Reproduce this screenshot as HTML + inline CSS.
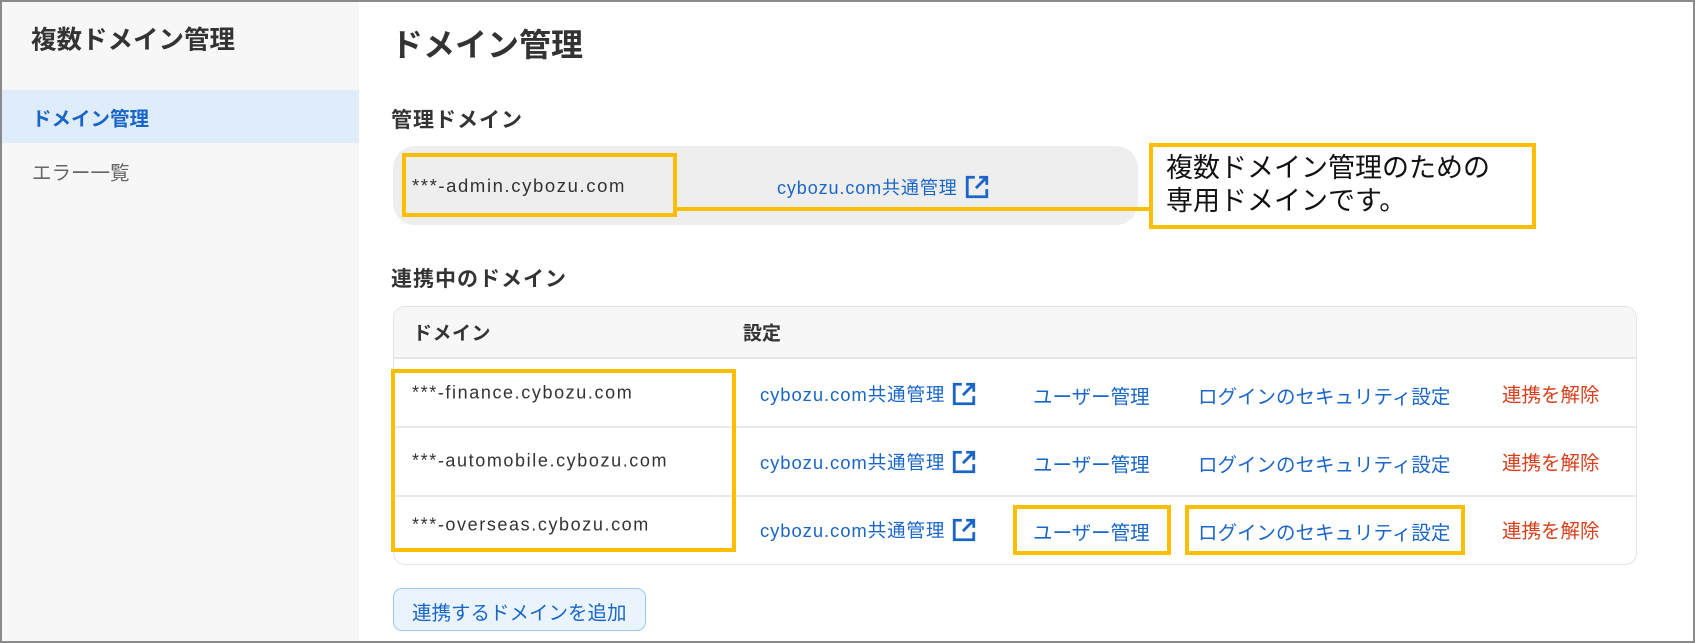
<!DOCTYPE html>
<html><head><meta charset="utf-8"><style>
*{box-sizing:border-box;margin:0;padding:0}
body{width:1695px;height:643px;overflow:hidden;background:#fff;font-family:"Liberation Sans","Noto Sans CJK JP",sans-serif;color:#333;position:relative}
.frame{position:absolute;inset:0;border:2px solid #8a8a8a;pointer-events:none;z-index:10}
.abs{position:absolute;white-space:nowrap}
.side{position:absolute;left:0;top:0;width:359px;height:643px;background:#f7f7f7}
.b{font-weight:bold}
.blue{color:#1a66c8}
.red{color:#d6401c}
.yb{position:absolute;border:4px solid #fbbf00}
.c{transform:translateY(-50%)}
.lat{font-size:18px;letter-spacing:1.6px}
.jp{font-size:19.5px}
.lnk{font-size:18.5px;letter-spacing:0.9px;display:flex;align-items:center}
.lnk svg{margin-left:6px}
</style></head><body>
<div class="side"></div>
<div class="abs c b" style="left:31px;top:38px;font-size:25.5px;color:#333">複数ドメイン管理</div>
<div class="abs" style="left:0;top:90px;width:359px;height:53px;background:#dfedfb"></div>
<div class="abs c b blue" style="left:32px;top:117px;font-size:19.5px">ドメイン管理</div>
<div class="abs c" style="left:32px;top:171px;font-size:19.5px;color:#666">エラー一覧</div>

<div class="abs c b" style="left:391px;top:43px;font-size:32px;color:#333">ドメイン管理</div>
<div class="abs c b" style="left:391px;top:119px;font-size:21px;letter-spacing:1px">管理ドメイン</div>
<div class="abs" style="left:393px;top:146px;width:745px;height:79px;background:#eeeeee;border-radius:22px"></div>
<div class="yb" style="left:402px;top:153px;width:275px;height:64px"></div>
<div class="abs c lat" style="left:412px;top:186px;font-size:18.5px">***-admin.cybozu.com</div>
<div class="abs c blue lnk" style="left:777px;top:187px;font-size:18px">cybozu.com共通管理<svg width="26" height="26" viewBox="0 0 24 24" fill="none" stroke="#1a66c8" stroke-width="2.6"><path d="M10 3H3v18h18v-7"/><path d="M14 3h7v7M21 3L11 13"/></svg></div>
<div class="abs" style="left:677px;top:207px;width:472px;height:4px;background:#fbbf00"></div>
<div class="yb" style="left:1149px;top:143px;width:387px;height:86px;background:#fff"></div>
<div class="abs" style="left:1166px;top:152px;font-size:27px;line-height:33px;color:#111">複数ドメイン管理のための<br>専用ドメインです。</div>

<div class="abs c b" style="left:391px;top:278px;font-size:21px;letter-spacing:1px">連携中のドメイン</div>
<div class="abs" style="left:393px;top:306px;width:1244px;height:259px;border:1px solid #e3e3e3;border-radius:12px;overflow:hidden">
 <div style="height:52px;background:#f7f7f7;border-bottom:2px solid #e6e6e6"></div>
 <div style="height:69px;border-bottom:2px solid #eaeaea"></div>
 <div style="height:69px;border-bottom:2px solid #eaeaea"></div>
</div>
<div class="abs c b" style="left:413px;top:332px;font-size:19px;letter-spacing:0.5px">ドメイン</div>
<div class="abs c b" style="left:743px;top:332px;font-size:19px">設定</div>

<div class="yb" style="left:391px;top:369px;width:345px;height:183px"></div>
<div class="yb" style="left:1013px;top:505px;width:158px;height:50px"></div>
<div class="yb" style="left:1185px;top:505px;width:280px;height:50px"></div>

<div class="abs c lat" style="left:412px;top:393px">***-finance.cybozu.com</div>
<div class="abs c lat" style="left:412px;top:461px">***-automobile.cybozu.com</div>
<div class="abs c lat" style="left:412px;top:525px">***-overseas.cybozu.com</div>

<div class="abs c blue lnk" style="left:760px;top:394px">cybozu.com共通管理<svg width="26" height="26" viewBox="0 0 24 24" fill="none" stroke="#1a66c8" stroke-width="2.6"><path d="M10 3H3v18h18v-7"/><path d="M14 3h7v7M21 3L11 13"/></svg></div>
<div class="abs c blue lnk" style="left:760px;top:462px">cybozu.com共通管理<svg width="26" height="26" viewBox="0 0 24 24" fill="none" stroke="#1a66c8" stroke-width="2.6"><path d="M10 3H3v18h18v-7"/><path d="M14 3h7v7M21 3L11 13"/></svg></div>
<div class="abs c blue lnk" style="left:760px;top:530px">cybozu.com共通管理<svg width="26" height="26" viewBox="0 0 24 24" fill="none" stroke="#1a66c8" stroke-width="2.6"><path d="M10 3H3v18h18v-7"/><path d="M14 3h7v7M21 3L11 13"/></svg></div>

<div class="abs c blue jp" style="left:1033px;top:395px">ユーザー管理</div>
<div class="abs c blue jp" style="left:1033px;top:463px">ユーザー管理</div>
<div class="abs c blue jp" style="left:1033px;top:531px">ユーザー管理</div>
<div class="abs c blue jp" style="left:1198px;top:395px">ログインのセキュリティ設定</div>
<div class="abs c blue jp" style="left:1198px;top:463px">ログインのセキュリティ設定</div>
<div class="abs c blue jp" style="left:1198px;top:531px">ログインのセキュリティ設定</div>
<div class="abs c red jp" style="left:1502px;top:393px">連携を解除</div>
<div class="abs c red jp" style="left:1502px;top:461px">連携を解除</div>
<div class="abs c red jp" style="left:1502px;top:529px">連携を解除</div>

<div class="abs" style="left:393px;top:588px;width:253px;height:43px;background:#eaf4fe;border:1.5px solid #9cc8f0;border-radius:9px"></div>
<div class="abs c blue jp" style="left:412px;top:611px">連携するドメインを追加</div>
<div class="frame"></div>
</body></html>
